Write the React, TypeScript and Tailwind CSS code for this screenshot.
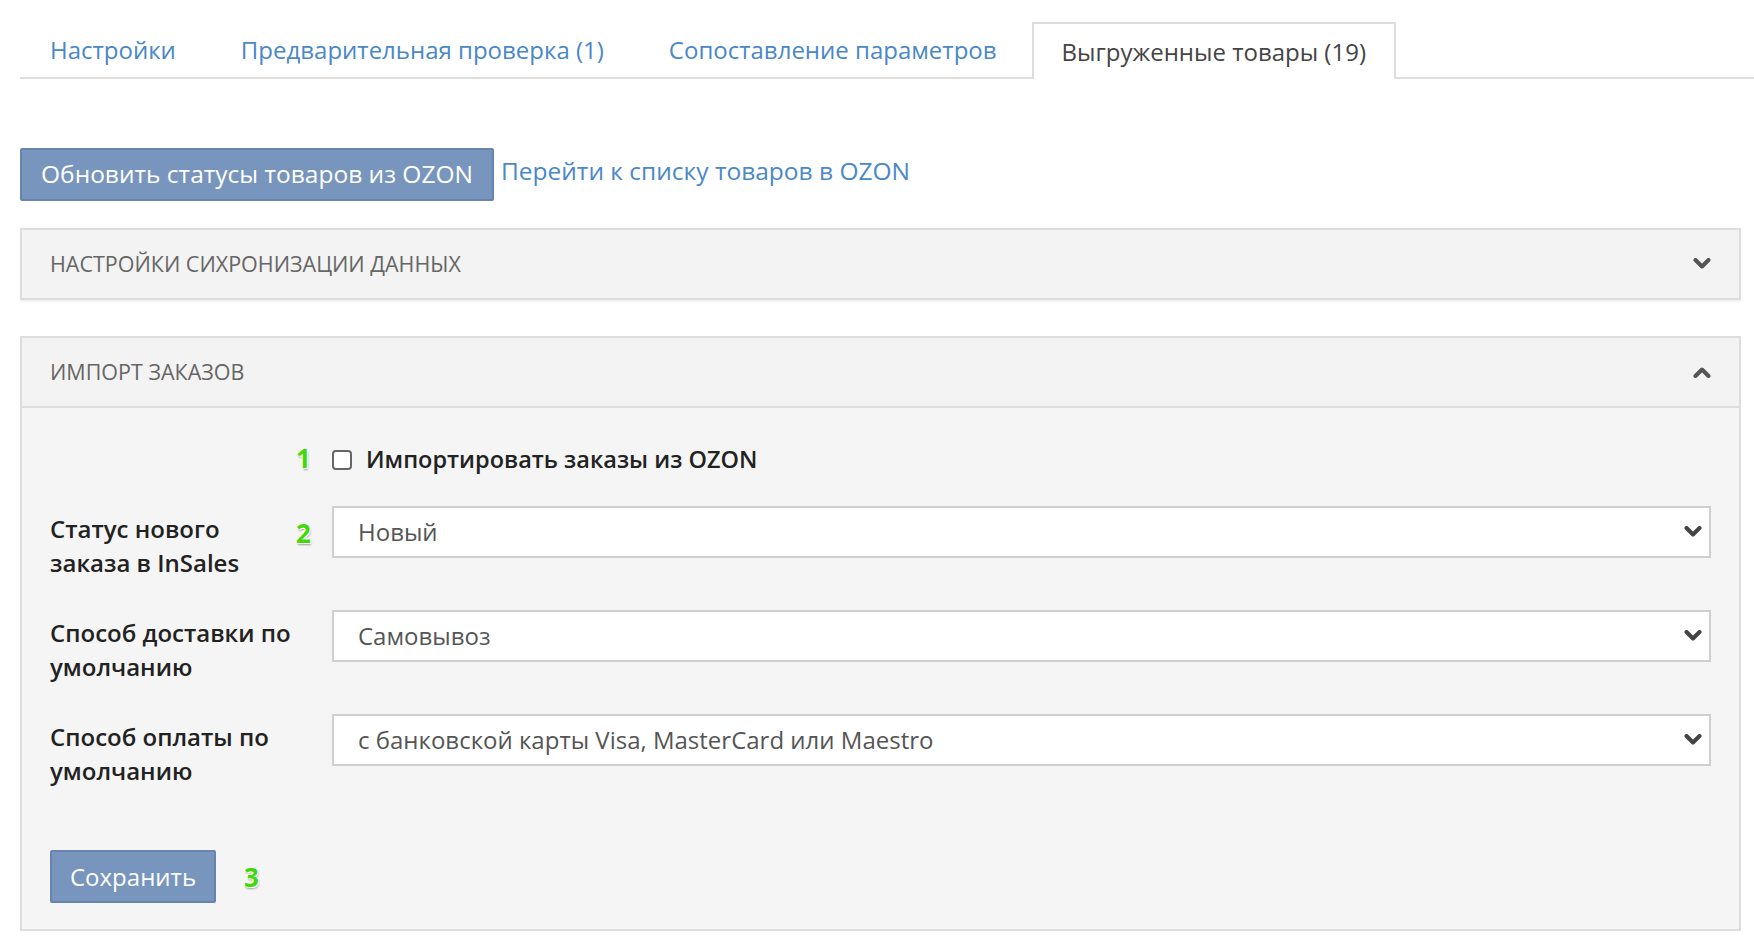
import React from "react";

const tabs = [
  { label: "Настройки", active: false },
  { label: "Предварительная проверка (1)", active: false },
  { label: "Сопоставление параметров", active: false },
  { label: "Выгруженные товары (19)", active: true },
];

// heavy chevron, like the old icon-font one
function Chevron({ up = false, className = "" }: { up?: boolean; className?: string }) {
  return (
    <svg width="18" height="12" viewBox="0 0 18 12" className={className}>
      <polyline
        points={up ? "2.5,10 9,3.5 15.5,10" : "2.5,2 9,8.5 15.5,2"}
        fill="none"
        stroke="currentColor"
        strokeWidth="4"
        strokeLinecap="round"
        strokeLinejoin="round"
      />
    </svg>
  );
}

function Mark({ n }: { n: string }) {
  return (
    <span className="text-[26px] font-bold leading-none text-[#3fd80a] [text-shadow:0_0_1px_#fff,1px_1px_0_#fff,-1px_-1px_0_#fff,1px_2px_2px_rgba(0,0,0,0.35)]">
      {n}
    </span>
  );
}

function Select({ value }: { value: string }) {
  return (
    <div className="flex h-[52px] items-center justify-between border-2 border-[#cfcfcf] bg-white pl-[24px] pr-[7px] text-[24px] text-[#555]">
      <span>{value}</span>
      <Chevron className="text-[#444]" />
    </div>
  );
}

function FieldRow({ label, value, mark }: { label: React.ReactNode; value: string; mark?: string }) {
  return (
    <div className="grid grid-cols-[246px_36px_1fr] items-start">
      <div className="pt-[6px] text-[24px] font-semibold leading-[34px] text-[#222] whitespace-nowrap">{label}</div>
      <div className="pt-[14px]">{mark && <Mark n={mark} />}</div>
      <Select value={value} />
    </div>
  );
}

function PanelHeader({ title, open }: { title: string; open: boolean }) {
  return (
    <div className="flex h-[68px] items-center justify-between bg-[#f3f3f3] pl-[28px] pr-[28px]">
      <span className="text-[21.5px] uppercase text-[#666]">{title}</span>
      <Chevron up={open} className="text-[#555]" />
    </div>
  );
}

export default function App() {
  return (
    <div className="min-h-screen bg-white pl-5 pr-[13px] pt-[22px] font-['Open_Sans',sans-serif]">
      {/* tabs */}
      <div className="-mr-[13px] flex h-[57px] border-b-2 border-[#ddd]">
        {tabs.map((t) => (
          <div
            key={t.label}
            className={
              t.active
                ? "-mb-[2px] flex items-center border-2 border-b-0 border-[#ddd] bg-white px-[28px] text-[24px] text-[#444]"
                : "mr-[5px] flex items-center border-2 border-transparent px-[28px] text-[24px] text-[#4a88c7]"
            }
          >
            {t.label}
          </div>
        ))}
      </div>

      {/* actions */}
      <div className="mt-[69px] flex items-center">
        <button className="h-[53px] rounded-[2px] border-2 border-[#6784ae] bg-[#7795bd] px-[19px] text-[24.5px] text-white">
          Обновить статусы товаров из OZON
        </button>
        <a className="ml-[7px] -mt-[7px] text-[24.5px] text-[#4a88c7]">Перейти к списку товаров в OZON</a>
      </div>

      {/* sync settings */}
      <div className="mt-[27px] border-2 border-[#ddd] shadow-[0_2px_2px_rgba(0,0,0,0.06)]">
        <PanelHeader title="Настройки сихронизации данных" open={false} />
      </div>

      {/* orders import */}
      <div className="mt-[36px] border-2 border-[#ddd] bg-[#f5f5f5]">
        <PanelHeader title="Импорт заказов" open={true} />
        <div className="border-t-2 border-[#ddd] pb-[26px] pl-[28px] pr-[28px] pt-[34px]">
          <div className="grid h-[32px] grid-cols-[246px_36px_1fr] items-center">
            <div />
            <div>
              <Mark n="1" />
            </div>
            <label className="flex items-center gap-[14px] text-[23.5px] font-semibold text-[#222]">
              <span className="h-[20px] w-[20px] rounded-[4px] border-2 border-[#666] bg-white" />
              Импортировать заказы из OZON
            </label>
          </div>

          <div className="mt-[32px] flex flex-col gap-[30px]">
            <FieldRow
              mark="2"
              label={
                <>
                  Статус нового
                  <br />
                  заказа в InSales
                </>
              }
              value="Новый"
            />
            <FieldRow
              label={
                <>
                  Способ доставки по
                  <br />
                  умолчанию
                </>
              }
              value="Самовывоз"
            />
            <FieldRow
              label={
                <>
                  Способ оплаты по
                  <br />
                  умолчанию
                </>
              }
              value="с банковской карты Visa, MasterCard или Maestro"
            />
          </div>

          <div className="mt-[62px] flex items-center gap-[28px]">
            <button className="h-[53px] rounded-[2px] border-2 border-[#6784ae] bg-[#7795bd] px-[18px] text-[24px] text-white">
              Сохранить
            </button>
            <Mark n="3" />
          </div>
        </div>
      </div>
    </div>
  );
}
